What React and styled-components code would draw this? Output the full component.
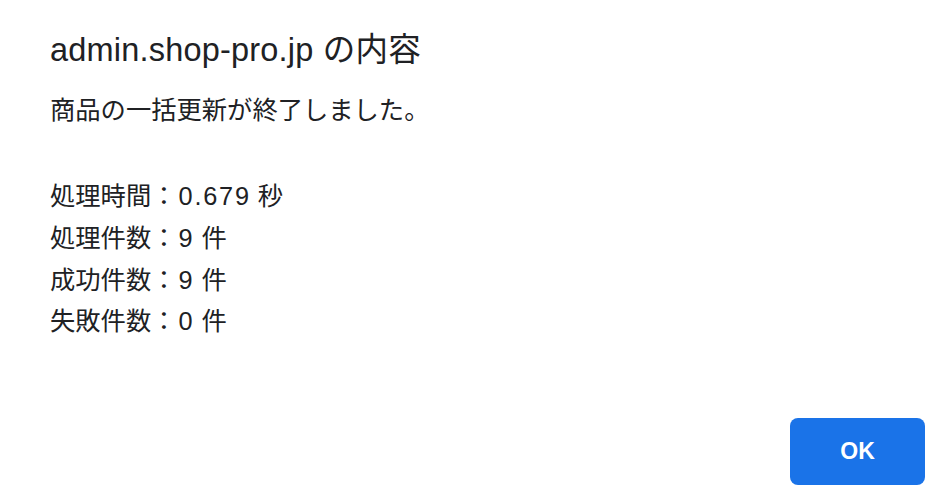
import React from "react";
import styled, { createGlobalStyle } from "styled-components";

const GlobalStyle = createGlobalStyle`
  html, body {
    margin: 0;
    padding: 0;
    background: #ffffff;
  }
  body {
    font-family: "Liberation Sans", "Noto Sans CJK JP", sans-serif;
    color: #202124;
  }
`;

const Dialog = styled.div`
  box-sizing: border-box;
  width: 941px;
  height: 502px;
  padding: 30px 16px 17px 50px;
  display: flex;
  flex-direction: column;
  background: #ffffff;
`;

const Title = styled.h1`
  margin: 0;
  font-size: 32.5px;
  line-height: 40px;
  font-weight: 400;
  letter-spacing: 0.2px;
  color: #202124;
`;

const Message = styled.div`
  margin-top: 20px;
  font-size: 25.3px;
  line-height: 41.7px;
  color: #202124;
`;

const Lead = styled.p`
  margin: 0 0 44.5px;
`;

const Stats = styled.ul`
  margin: 0;
  padding: 0;
  list-style: none;
`;

const StatRow = styled.li`
  display: block;
  white-space: pre;
`;

// Latin digits in the stats sit a little wider than the default face.
const Num = styled.span`
  margin-left: 2px;
  letter-spacing: 1.8px;
`;

const Footer = styled.div`
  margin-top: auto;
  display: flex;
  justify-content: flex-end;
`;

const OkButton = styled.button`
  width: 135px;
  height: 67px;
  border: none;
  border-radius: 8px;
  background: #1a73e8;
  color: #ffffff;
  font-family: "Liberation Sans", sans-serif;
  font-size: 23px;
  font-weight: 700;
  cursor: pointer;
`;

const stats = [
  { label: "処理時間", value: "0.679", unit: "秒" },
  { label: "処理件数", value: "9", unit: "件" },
  { label: "成功件数", value: "9", unit: "件" },
  { label: "失敗件数", value: "0", unit: "件" },
];

export default function App() {
  return (
    <>
      <GlobalStyle />
      <Dialog>
        <Title>admin.shop-pro.jp の内容</Title>
        <Message>
          <Lead>商品の一括更新が終了しました。</Lead>
          <Stats>
            {stats.map((s) => (
              <StatRow key={s.label}>
                {s.label}：<Num>{s.value}</Num>{" " + s.unit}
              </StatRow>
            ))}
          </Stats>
        </Message>
        <Footer>
          <OkButton>OK</OkButton>
        </Footer>
      </Dialog>
    </>
  );
}
